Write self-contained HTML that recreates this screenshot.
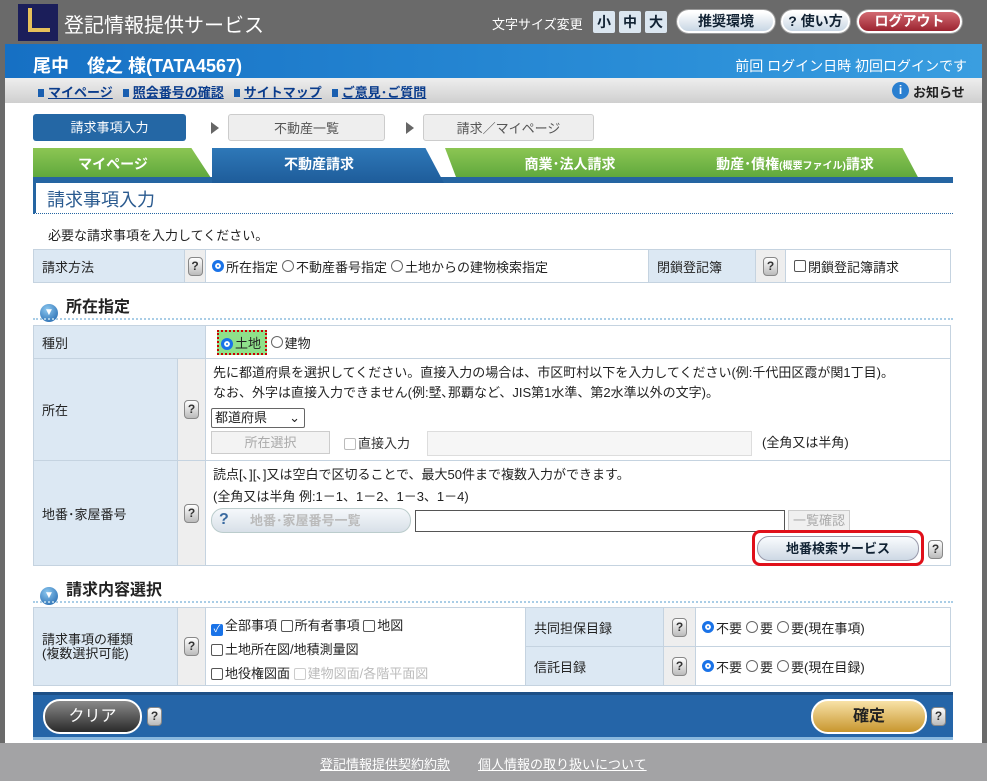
<!DOCTYPE html>
<html><head><meta charset="utf-8"><style>
*{margin:0;padding:0;box-sizing:border-box}
body{width:987px;height:781px;background:#6a6a6a;font-family:"Liberation Sans","Noto Sans CJK JP",sans-serif;font-size:13px;color:#222;position:relative;overflow:hidden}
.a{position:absolute}
.white{left:5px;top:44px;width:977px;height:699px;background:#fff}
.btn{border-radius:12px;border:2px solid #fff;box-shadow:0 0 0 1px #999;text-align:center;font-weight:bold;font-size:14px;line-height:19px}
.fs{background:#dbe6f0;color:#123;width:22px;height:22px;text-align:center;line-height:22px;font-size:14px;border-radius:2px;font-weight:bold}
.nav a{color:#0a3c8c;text-decoration:underline;margin-right:10px;font-weight:bold}
.nav b{display:inline-block;width:6px;height:8px;background:#1a5fb0;margin-right:4px}
.step{height:27px;line-height:27px;text-align:center;border-radius:3px;font-size:13px}
.tab{height:33px;line-height:33px;color:#fff;font-weight:bold;font-size:14px;text-align:center;background:linear-gradient(#8cc653,#5aa43a)}
.lbl{background:#dce8f3;border:1px solid #c5d3e0;padding-left:8px;display:flex;align-items:center}
.q{background:#eee;border:1px solid #c5d3e0;display:flex;align-items:center;justify-content:center}
.c{border:1px solid #c5d3e0;background:#fff;display:flex;align-items:center;padding-left:6px}
.qi{display:inline-block;width:15px;height:19px;border:1px solid #888;border-radius:4px;background:linear-gradient(#fff,#bbb);font-size:12px;line-height:17px;text-align:center;color:#333;font-weight:bold}
.rd{display:inline-block;width:12px;height:12px;border:1px solid #666;border-radius:50%;vertical-align:-2px;margin-right:2px;background:#fff}
.rd.on{border:3px solid #1a73e8;box-shadow:inset 0 0 0 2px #fff;background:#1a73e8}
.cb{display:inline-block;width:12px;height:12px;border:1px solid #555;border-radius:2px;vertical-align:-2px;margin-right:2px;background:#fff}
.cb.on{background:#1a73e8;border-color:#1a73e8;color:#fff;font-size:10px;line-height:10px;text-align:center}
.sec{font-size:16px;font-weight:bold;color:#222}
.sec i{display:inline-block;width:18px;height:18px;border-radius:50%;background:radial-gradient(circle at 40% 30%,#8cc8f0,#1a5fa8);vertical-align:-3px;margin-right:8px;color:#fff;font-style:normal;font-size:10px;text-align:center;line-height:18px}
.dot{border-top:2px dotted #a9cde6;height:0}
</style></head><body>
<!-- header -->
<div class="a" style="left:18px;top:4px;width:40px;height:37px;background:#1b1e5a"></div>
<div class="a" style="left:28px;top:8px;width:4px;height:24px;background:#e6c05a"></div>
<div class="a" style="left:28px;top:28px;width:22px;height:4px;background:#e6c05a"></div>
<div class="a" style="left:64px;top:9px;color:#fff;font-size:20px">登記情報提供サービス</div>
<div class="a" style="left:492px;top:14px;color:#fff;font-size:13px">文字サイズ変更</div>
<div class="a fs" style="left:593px;top:11px">小</div>
<div class="a fs" style="left:619px;top:11px">中</div>
<div class="a fs" style="left:645px;top:11px">大</div>
<div class="a btn" style="left:677px;top:10px;width:98px;height:23px;background:linear-gradient(#fff,#c8d6e4);color:#123">推奨環境</div>
<div class="a btn" style="left:781px;top:10px;width:69px;height:23px;background:linear-gradient(#fff,#c8d6e4);color:#123">? 使い方</div>
<div class="a btn" style="left:857px;top:10px;width:105px;height:23px;background:linear-gradient(#d26a72,#9c2430);color:#fff">ログアウト</div>
<div class="a white"></div>
<div class="a" style="left:5px;top:44px;width:977px;height:34px;background:linear-gradient(90deg,#1670c4,#2b8fd8 70%,#3a9ee0)"></div>
<div class="a" style="left:33px;top:52px;color:#fff;font-size:18px;font-weight:bold">尾中　俊之 様(TATA4567)</div>
<div class="a" style="right:20px;top:56px;color:#fff;font-size:14px">前回 ログイン日時 初回ログインです</div>
<div class="a nav" style="left:5px;top:78px;width:977px;height:25px;background:linear-gradient(#eee,#cfcfcf);padding:4px 0 0 33px;font-size:13px"><b></b><a>マイページ</a><b></b><a>照会番号の確認</a><b></b><a>サイトマップ</a><b></b><a>ご意見･ご質問</a></div>
<div class="a" style="left:892px;top:82px;width:17px;height:17px;border-radius:50%;background:#2a7fd0;color:#fff;text-align:center;font-size:12px;font-weight:bold;line-height:17px">i</div>
<div class="a" style="left:913px;top:82px;font-size:13px;font-weight:bold">お知らせ</div>
<!-- steps -->
<div class="a step" style="left:33px;top:114px;width:153px;background:#2467a5;color:#fff">請求事項入力</div>
<div class="a" style="left:211px;top:122px;border-left:8px solid #666;border-top:6px solid transparent;border-bottom:6px solid transparent"></div>
<div class="a step" style="left:228px;top:114px;width:157px;background:#eee;border:1px solid #ccc;color:#555">不動産一覧</div>
<div class="a" style="left:406px;top:122px;border-left:8px solid #666;border-top:6px solid transparent;border-bottom:6px solid transparent"></div>
<div class="a step" style="left:423px;top:114px;width:171px;background:#eee;border:1px solid #ccc;color:#555">請求／マイページ</div>
<!-- tabs -->
<div class="a tab" style="left:33px;top:148px;width:180px;clip-path:polygon(0 0,88% 0,100% 100%,0 100%);padding-right:20px">マイページ</div>
<div class="a tab" style="left:445px;top:148px;width:250px;clip-path:polygon(0 0,93% 0,100% 100%,5% 100%)">商業･法人請求</div>
<div class="a tab" style="left:670px;top:148px;width:250px;clip-path:polygon(0 0,93% 0,100% 100%,5% 100%)">動産･債権<span style="font-size:10px">(概要ファイル)</span>請求</div>
<div class="a" style="left:33px;top:177px;width:920px;height:6px;background:#2565a2"></div>
<div class="a tab" style="left:212px;top:148px;width:232px;height:35px;background:linear-gradient(#2e78b8,#1e5c9a);clip-path:polygon(0 0,92% 0,100% 100%,0 100%);padding-right:18px">不動産請求</div>
<div class="a" style="left:33px;top:183px;width:3px;height:30px;background:#2565a2"></div>
<div class="a" style="left:47px;top:186px;font-size:18px;color:#2a5a8f">請求事項入力</div>
<div class="a dot" style="left:33px;top:213px;width:920px;border-top:1px dotted #2565a2"></div>
<div class="a" style="left:48px;top:225px">必要な請求事項を入力してください。</div>
<!-- table1 -->
<div class="a lbl" style="left:33px;top:249px;width:152px;height:34px">請求方法</div>
<div class="a q" style="left:184px;top:249px;width:22px;height:34px"><span class="qi">?</span></div>
<div class="a c" style="left:205px;top:249px;width:444px;height:34px"><span class="rd on"></span>所在指定 <span class="rd" style="margin-left:4px"></span>不動産番号指定 <span class="rd" style="margin-left:4px"></span>土地からの建物検索指定</div>
<div class="a lbl" style="left:648px;top:249px;width:108px;height:34px">閉鎖登記簿</div>
<div class="a q" style="left:755px;top:249px;width:31px;height:34px"><span class="qi">?</span></div>
<div class="a c" style="left:785px;top:249px;width:166px;height:34px;padding-left:8px"><span class="cb"></span>閉鎖登記簿請求</div>
<!-- sec1 -->
<div class="a sec" style="left:40px;top:293px"><i>▼</i>所在指定</div>
<div class="a dot" style="left:33px;top:318px;width:920px"></div>
<div class="a lbl" style="left:33px;top:325px;width:173px;height:34px">種別</div>
<div class="a c" style="left:205px;top:325px;width:746px;height:34px"><span style="background:#8fe08a;border:2px dotted #c00;padding:1px 4px 1px 2px;margin-left:5px"><span class="rd on"></span>土地</span>&nbsp;<span class="rd"></span>建物</div>
<div class="a lbl" style="left:33px;top:358px;width:145px;height:103px">所在</div>
<div class="a q" style="left:177px;top:358px;width:29px;height:103px"><span class="qi">?</span></div>
<div class="a c" style="left:205px;top:358px;width:746px;height:103px"></div>
<div class="a" style="left:213px;top:363px;line-height:20px">先に都道府県を選択してください。直接入力の場合は、市区町村以下を入力してください(例:千代田区霞が関1丁目)。<br>なお、外字は直接入力できません(例:㙒､那覇など、JIS第1水準、第2水準以外の文字)。</div>
<div class="a" style="left:211px;top:408px;width:94px;height:20px;border:1px solid #666;border-radius:2px;padding-left:3px;line-height:18px">都道府県 <span style="float:right;margin-right:4px">⌄</span></div>
<div class="a" style="left:211px;top:431px;width:119px;height:23px;border:1px solid #ccc;background:#f3f3f3;color:#aaa;text-align:center;line-height:21px">所在選択</div>
<div class="a" style="left:344px;top:433px;color:#333"><span class="cb" style="border-color:#bbb"></span>直接入力</div>
<div class="a" style="left:427px;top:431px;width:325px;height:25px;border:1px solid #ddd;background:#f6f6f6"></div>
<div class="a" style="left:762px;top:432px">(全角又は半角)</div>
<div class="a lbl" style="left:33px;top:460px;width:145px;height:106px">地番･家屋番号</div>
<div class="a q" style="left:177px;top:460px;width:29px;height:106px"><span class="qi">?</span></div>
<div class="a c" style="left:205px;top:460px;width:746px;height:106px"></div>
<div class="a" style="left:213px;top:464px;line-height:22px">読点[､][､]又は空白で区切ることで、最大50件まで複数入力ができます。<br>(全角又は半角 例:1－1、1－2、1－3、1－4)</div>
<div class="a" style="left:211px;top:508px;width:200px;height:25px;border-radius:12px;border:1px solid #bcc;background:linear-gradient(#f5f8fb,#d8e0e8);color:#bbb;font-weight:bold;line-height:23px;padding-left:38px">地番･家屋番号一覧</div>
<div class="a" style="left:219px;top:511px;color:#3a6aa0;font-weight:bold;font-size:16px">?</div>
<div class="a" style="left:415px;top:510px;width:370px;height:22px;border:1px solid #555"></div>
<div class="a" style="left:788px;top:510px;width:62px;height:21px;border:1px solid #ccc;background:#f0f0f0;color:#aaa;text-align:center;line-height:19px">一覧確認</div>
<div class="a" style="left:752px;top:530px;width:172px;height:36px;border:3px solid #e0101a;border-radius:8px"></div>
<div class="a" style="left:757px;top:536px;width:162px;height:25px;border-radius:12px;border:1px solid #99a;background:linear-gradient(#fafcfe,#cdd8e4);color:#123;font-weight:bold;text-align:center;line-height:23px">地番検索サービス</div>
<div class="a qi" style="left:928px;top:540px">?</div>
<!-- sec2 -->
<div class="a sec" style="left:40px;top:576px"><i>▼</i>請求内容選択</div>
<div class="a dot" style="left:33px;top:601px;width:920px"></div>
<div class="a lbl" style="left:33px;top:607px;width:145px;height:79px;line-height:14px">請求事項の種類<br>(複数選択可能)</div>
<div class="a q" style="left:177px;top:607px;width:29px;height:79px"><span class="qi">?</span></div>
<div class="a c" style="left:205px;top:607px;width:321px;height:79px"></div>
<div class="a" style="left:211px;top:614px;line-height:24px"><span class="cb on">✓</span>全部事項 <span class="cb"></span>所有者事項 <span class="cb"></span>地図<br><span class="cb"></span>土地所在図/地積測量図<br><span class="cb"></span>地役権図面 <span style="color:#bbb"><span class="cb" style="border-color:#ccc"></span>建物図面/各階平面図</span></div>
<div class="a lbl" style="left:525px;top:607px;width:139px;height:40px">共同担保目録</div>
<div class="a q" style="left:663px;top:607px;width:33px;height:40px"><span class="qi">?</span></div>
<div class="a c" style="left:695px;top:607px;width:256px;height:40px"><span class="rd on"></span>不要 <span class="rd" style="margin-left:4px"></span>要 <span class="rd" style="margin-left:4px"></span>要(現在事項)</div>
<div class="a lbl" style="left:525px;top:646px;width:139px;height:40px">信託目録</div>
<div class="a q" style="left:663px;top:646px;width:33px;height:40px"><span class="qi">?</span></div>
<div class="a c" style="left:695px;top:646px;width:256px;height:40px"><span class="rd on"></span>不要 <span class="rd" style="margin-left:4px"></span>要 <span class="rd" style="margin-left:4px"></span>要(現在目録)</div>
<!-- bottom bar -->
<div class="a" style="left:33px;top:692px;width:920px;height:48px;background:#2565a8;border-top:3px solid #1d4f86;border-bottom:3px solid #8ab8de"></div>
<div class="a" style="left:43px;top:699px;width:99px;height:35px;border:2px solid #fff;border-radius:17px;background:linear-gradient(#8a8a8a,#2a2a2a);color:#fff;font-size:16px;text-align:center;line-height:31px">クリア</div>
<div class="a qi" style="left:147px;top:707px">?</div>
<div class="a" style="left:811px;top:699px;width:116px;height:35px;border:2px solid #fff;border-radius:17px;background:linear-gradient(#f8e2a8,#c8962e);color:#222;font-size:16px;font-weight:bold;text-align:center;line-height:31px">確定</div>
<div class="a qi" style="left:931px;top:707px">?</div>
<!-- footer -->
<div class="a" style="left:0;top:743px;width:987px;height:38px;background:#a3a3a5"></div>
<div class="a" style="left:320px;top:754px;color:#fff;text-decoration:underline;font-size:13px">登記情報提供契約約款</div>
<div class="a" style="left:478px;top:754px;color:#fff;text-decoration:underline;font-size:13px">個人情報の取り扱いについて</div>
</body></html>
